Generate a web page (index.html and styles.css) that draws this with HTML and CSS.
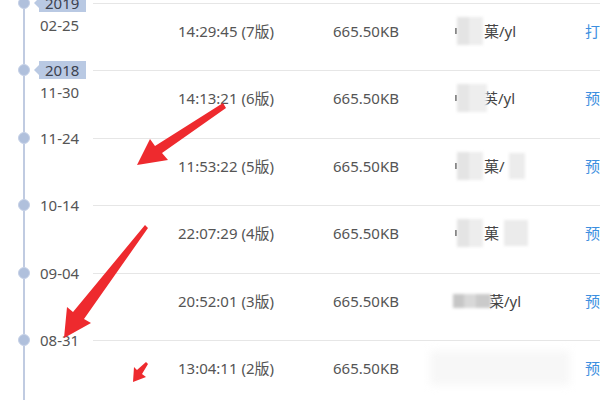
FILE: index.html
```html
<!DOCTYPE html>
<html lang="zh">
<head>
<meta charset="utf-8">
<link rel="stylesheet" href="styles.css">
</head>
<body>
<div class="page">
  <div class="timeline">
    <div class="row">
      <div class="when">
        <div class="mark"><span class="dot"></span><span class="year">2019</span></div>
        <div class="date sub">02-25</div>
      </div>
      <div class="cells">
        <span class="time">14:29:45 (7版)</span>
        <span class="size">665.50KB</span>
        <span class="name"><i class="tick"></i><i class="blur b1"></i>菓/yl</span>
        <span class="act">打</span>
      </div>
    </div>
    <div class="row">
      <div class="when">
        <div class="mark"><span class="dot"></span><span class="year">2018</span></div>
        <div class="date sub">11-30</div>
      </div>
      <div class="cells">
        <span class="time">14:13:21 (6版)</span>
        <span class="size">665.50KB</span>
        <span class="name"><i class="tick"></i><i class="blur b2"></i>芵/yl</span>
        <span class="act">预</span>
      </div>
    </div>
    <div class="row">
      <div class="when">
        <div class="mark"><span class="dot"></span><span class="date">11-24</span></div>
      </div>
      <div class="cells">
        <span class="time">11:53:22 (5版)</span>
        <span class="size">665.50KB</span>
        <span class="name"><i class="tick"></i><i class="blur b1"></i>菓/<i class="blur b3"></i></span>
        <span class="act">预</span>
      </div>
    </div>
    <div class="row">
      <div class="when">
        <div class="mark"><span class="dot"></span><span class="date">10-14</span></div>
      </div>
      <div class="cells">
        <span class="time">22:07:29 (4版)</span>
        <span class="size">665.50KB</span>
        <span class="name"><i class="tick"></i><i class="blur b1"></i>菓<i class="blur b4"></i></span>
        <span class="act">预</span>
      </div>
    </div>
    <div class="row">
      <div class="when">
        <div class="mark"><span class="dot"></span><span class="date">09-04</span></div>
      </div>
      <div class="cells">
        <span class="time">20:52:01 (3版)</span>
        <span class="size">665.50KB</span>
        <span class="name"><i class="blur b5"></i>菜/yl</span>
        <span class="act">预</span>
      </div>
    </div>
    <div class="row">
      <div class="when">
        <div class="mark"><span class="dot"></span><span class="date">08-31</span></div>
      </div>
      <div class="cells">
        <span class="time">13:04:11 (2版)</span>
        <span class="size">665.50KB</span>
        <span class="name"><i class="blur b6"></i></span>
        <span class="act">预</span>
      </div>
    </div>
  </div>
  <svg class="arrows" width="600" height="400" viewBox="0 0 600 400">
    <polygon points="137,165 150,139 155,146 223,103 226,108 162,153 168,160" />
    <polygon points="64,338 67,307 73,312 145,225 148,228 84,319 91,323" />
    <polygon points="133,382 134,367 137,370 146,362 148,364 142,374 146,377" />
  </svg>
</div>
</body>
</html>
```

FILE: styles.css
```css
html, body {
  margin: 0;
  padding: 0;
  background: #ffffff;
}
body {
  width: 600px;
  height: 400px;
  overflow: hidden;
  font-family: "Noto Sans", "Noto Sans CJK SC", sans-serif;
  font-size: 15px;
  color: #555555;
}
.page {
  position: relative;
  width: 600px;
  height: 400px;
  overflow: hidden;
}
.timeline {
  padding-top: 3px;
  background: linear-gradient(#c0cbe1, #c0cbe1) no-repeat 23px 0 / 2px 100%;
}
.row {
  display: flex;
  height: 67.4px;
}
.when {
  width: 93px;
  flex: none;
  margin-top: -9px;
}
.mark {
  display: flex;
  align-items: center;
  height: 18px;
}
.dot {
  width: 12px;
  height: 12px;
  box-sizing: border-box;
  border-radius: 50%;
  background: #b0c0dc;
  border: 1px solid #c6d1e7;
  margin-left: 18px;
  margin-right: 8px;
  flex: none;
}
.year {
  position: relative;
  background: #b9c9e3;
  color: #3c4250;
  height: 18px;
  line-height: 18px;
  padding: 0 7px 0 6px;
  margin-left: 1px;
}
.year::before {
  content: "";
  position: absolute;
  left: -5px;
  top: 4px;
  border-style: solid;
  border-width: 5px 5px 5px 0;
  border-color: transparent #b9c9e3 transparent transparent;
}
.date {
  color: #555555;
  line-height: 18px;
  margin-left: 2px;
}
.date.sub {
  margin-left: 40px;
  margin-top: 3px;
  line-height: 20px;
}
.cells {
  flex: 1;
  border-top: 1px solid #e6e6e6;
  display: grid;
  grid-template-columns: 85px 155px 122px 130px;
  align-items: start;
  padding-top: 17px;
  white-space: nowrap;
  height: 20px;
  line-height: 20px;
}
.time {
  grid-column: 2;
}
.size {
  grid-column: 3;
}
.name {
  grid-column: 4;
  display: flex;
  align-items: center;
  color: #444444;
  height: 20px;
}
.act {
  grid-column: 5;
  color: #3d8fe0;
}
.tick {
  width: 2px;
  height: 6px;
  background: #777777;
  flex: none;
}
.blur {
  display: inline-block;
  flex: none;
  filter: blur(1.5px);
}
.b1 {
  width: 26px;
  height: 28px;
  background: linear-gradient(90deg, #e4e4e4 0 45%, #ededed 45% 100%);
  margin-right: 1px;
}
.b2 {
  width: 30px;
  height: 28px;
  background: linear-gradient(90deg, #e6e6e6 0 40%, #eeeeee 40% 100%);
  margin-right: -4px;
}
.b3 {
  width: 16px;
  height: 26px;
  background: #ececec;
  margin-left: 4px;
}
.b4 {
  width: 24px;
  height: 26px;
  background: #ebebeb;
  margin-left: 5px;
}
.b5 {
  width: 38px;
  height: 14px;
  background: linear-gradient(90deg, #c6c6c6 0 30%, #d8d8d8 30% 60%, #cacaca 60% 100%);
  margin-right: -2px;
  margin-left: -2px;
}
.b6 {
  width: 140px;
  height: 34px;
  background: #f7f7f7;
  margin-left: -25px;
  filter: blur(4px);
}
.arrows {
  position: absolute;
  left: 0;
  top: 0;
  pointer-events: none;
}
.arrows polygon {
  fill: #ee2a2e;
}
```
